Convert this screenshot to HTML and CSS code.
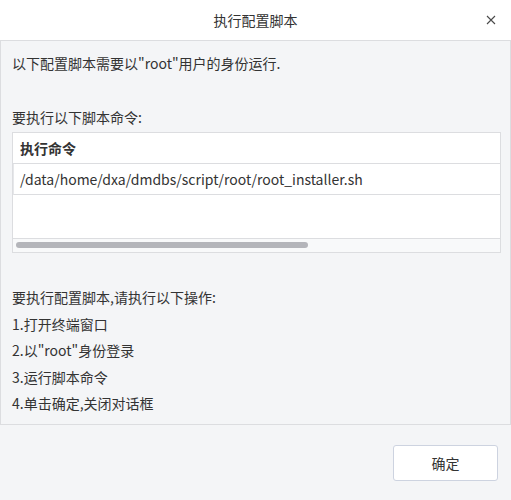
FILE: index.html
```html
<!DOCTYPE html>
<html lang="zh-CN">
<head>
<meta charset="utf-8">
<title>执行配置脚本</title>
<link rel="stylesheet" href="styles.css">
</head>
<body>
<div class="dialog">
  <header class="titlebar">
    <span class="title">执行配置脚本</span>
    <button class="close" aria-label="关闭">
      <svg width="10" height="10" viewBox="0 0 10 10"><path d="M1 1 L9 9 M9 1 L1 9" stroke="#4a4a4a" stroke-width="1.1" fill="none"/></svg>
    </button>
  </header>
  <main class="content">
    <p class="intro">以下配置脚本需要以"root"用户的身份运行.</p>
    <p class="label">要执行以下脚本命令:</p>
    <div class="table">
      <div class="thead">执行命令</div>
      <div class="row">/data/home/dxa/dmdbs/script/root/root_installer.sh</div>
      <div class="empty"></div>
      <div class="hscroll"><div class="thumb"></div></div>
    </div>
    <ul class="steps">
      <li>要执行配置脚本,请执行以下操作:</li>
      <li>1.打开终端窗口</li>
      <li>2.以"root"身份登录</li>
      <li>3.运行脚本命令</li>
      <li>4.单击确定,关闭对话框</li>
    </ul>
  </main>
  <footer class="footer">
    <button class="ok">确定</button>
  </footer>
</div>
</body>
</html>
```
FILE: styles.css
```css
* { box-sizing: border-box; }
html, body { margin: 0; padding: 0; }
body {
  width: 511px;
  height: 500px;
  font-family: "Noto Sans CJK SC", "Noto Sans", sans-serif;
  font-size: 14px;
  color: #333;
  background: #f4f5f7;
  overflow: hidden;
}
.dialog {
  display: flex;
  flex-direction: column;
  height: 500px;
}
.titlebar {
  height: 41px;
  background: #fff;
  border-bottom: 1px solid #dcdde0;
  display: flex;
  align-items: center;
  justify-content: center;
  position: relative;
}
.title {
  font-size: 14px;
  color: #333;
  line-height: 20px;
}
.close {
  position: absolute;
  right: 15px;
  top: 15px;
  width: 10px;
  height: 10px;
  padding: 0;
  border: 0;
  background: none;
  display: flex;
}
.content {
  height: 384px;
  background: #f4f5f7;
  border-left: 1px solid #dcdde0;
  border-right: 1px solid #dcdde0;
  border-bottom: 1px solid #dcdde0;
  padding: 12px 11px 0 11px;
}
.intro, .label {
  margin: 0;
  line-height: 20px;
}
.label { margin-top: 34px; }
.table {
  margin-top: 5px;
  background: #fff;
  border: 1px solid #dcdde0;
  width: 489px;
}
.thead {
  height: 31px;
  line-height: 31px;
  padding-left: 7px;
  font-weight: bold;
  border-bottom: 1px solid #dcdde0;
  color: #333;
}
.row {
  height: 31px;
  line-height: 31px;
  padding-left: 6px;
  border-bottom: 1px solid #dcdde0;
  border-left: 1px solid #e6e7ea;
  white-space: nowrap;
  font-size: 14px;
}
.empty {
  height: 44px;
  border-bottom: 1px solid #dcdde0;
}
.hscroll {
  height: 13px;
  background: #f8f9fa;
  padding: 3px 3px;
}
.thumb {
  width: 292px;
  height: 6px;
  border-radius: 3px;
  background: #b4b5ba;
}
.steps {
  list-style: none;
  margin: 31px 0 0 0;
  padding: 0;
}
.steps li {
  line-height: 26.5px;
  height: 26.5px;
}
.footer {
  flex: 1;
  display: flex;
  justify-content: flex-end;
  align-items: flex-start;
  padding: 20px 13px 0 0;
}
.ok {
  width: 105px;
  height: 36px;
  background: #fff;
  border: 1px solid #cdd3e0;
  border-radius: 3px;
  font-family: "Noto Sans CJK SC", sans-serif;
  font-size: 14px;
  color: #333;
}
```
